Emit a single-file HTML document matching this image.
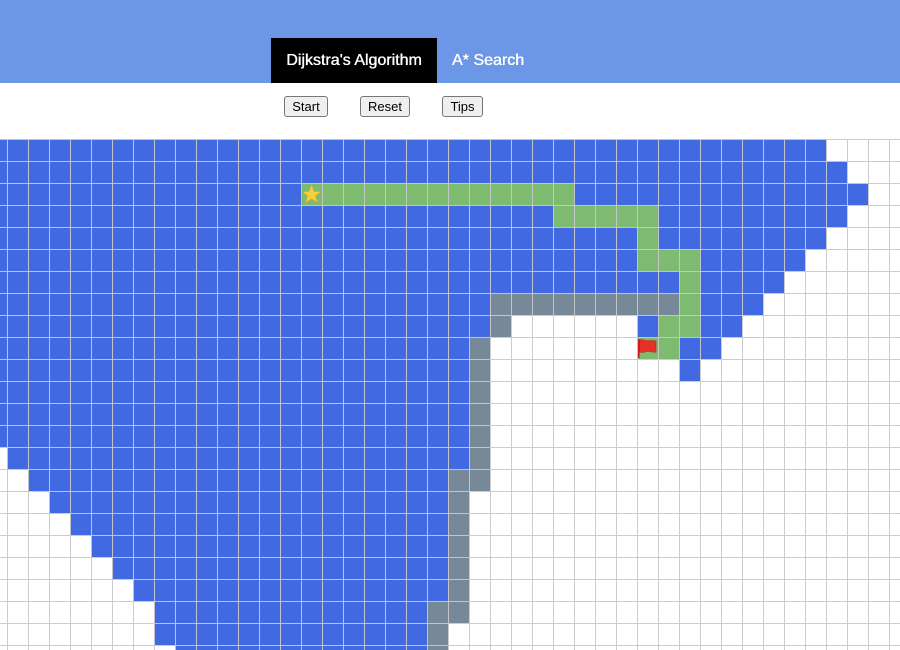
<!DOCTYPE html>
<html style="overflow:hidden;width:900px;height:650px"><head><style>
body{margin:0;width:900px;height:650px;overflow:hidden;background:#fff;font-family:"Liberation Sans",sans-serif;position:relative}
.hd{position:absolute;left:0;top:0;width:900px;height:83px;background:#6b97e6}
.tab{position:absolute;top:38px;height:45px;line-height:45px;color:#fff;font-size:16px;font-weight:normal;text-shadow:0 0 .4px #fff,.3px 0 0 #fff;font-family:"Liberation Sans",sans-serif}
.btn{position:absolute;top:96px;height:21px;box-sizing:border-box;border:1px solid #767676;border-radius:3px;background:#efefef;font-size:13px;line-height:19px;text-align:center;color:#000}
.r{position:absolute;height:22px}
.b{background:#4169e1}.y{background:#778899}.n{background:#7fba71}
.lines{position:absolute;left:0;top:139px;width:900px;height:511px;
background-image:repeating-linear-gradient(to right,rgba(200,200,205,.95) 0 1px,transparent 1px 21px),repeating-linear-gradient(to bottom,rgba(200,200,205,.95) 0 1px,transparent 1px 22px);
background-position:7px 0,0 0}
</style></head><body>
<div class="hd"></div>
<div class="tab" style="left:271px;width:166px;background:#000;text-align:center">Dijkstra's Algorithm</div>
<div class="tab" style="left:452px">A* Search</div>
<div class="btn" style="left:284px;width:44px">Start</div>
<div class="btn" style="left:360px;width:50px">Reset</div>
<div class="btn" style="left:442px;width:41px">Tips</div>

<div class="r b" style="left:-14px;top:139px;width:840px"></div>
<div class="r b" style="left:-14px;top:161px;width:861px"></div>
<div class="r b" style="left:-14px;top:183px;width:882px"></div>
<div class="r n" style="left:301px;top:183px;width:273px"></div>
<div class="r b" style="left:-14px;top:205px;width:861px"></div>
<div class="r n" style="left:553px;top:205px;width:105px"></div>
<div class="r b" style="left:-14px;top:227px;width:840px"></div>
<div class="r n" style="left:637px;top:227px;width:21px"></div>
<div class="r b" style="left:-14px;top:249px;width:819px"></div>
<div class="r n" style="left:637px;top:249px;width:63px"></div>
<div class="r b" style="left:-14px;top:271px;width:798px"></div>
<div class="r n" style="left:679px;top:271px;width:21px"></div>
<div class="r b" style="left:-14px;top:293px;width:777px"></div>
<div class="r y" style="left:490px;top:293px;width:189px"></div>
<div class="r n" style="left:679px;top:293px;width:21px"></div>
<div class="r b" style="left:-14px;top:315px;width:504px"></div>
<div class="r y" style="left:490px;top:315px;width:21px"></div>
<div class="r b" style="left:637px;top:315px;width:21px"></div>
<div class="r n" style="left:658px;top:315px;width:42px"></div>
<div class="r b" style="left:700px;top:315px;width:42px"></div>
<div class="r b" style="left:-14px;top:337px;width:483px"></div>
<div class="r y" style="left:469px;top:337px;width:21px"></div>
<div class="r n" style="left:637px;top:337px;width:42px"></div>
<div class="r b" style="left:679px;top:337px;width:42px"></div>
<div class="r b" style="left:-14px;top:359px;width:483px"></div>
<div class="r y" style="left:469px;top:359px;width:21px"></div>
<div class="r b" style="left:679px;top:359px;width:21px"></div>
<div class="r b" style="left:-14px;top:381px;width:483px;height:66px"></div>
<div class="r y" style="left:469px;top:381px;width:21px;height:88px"></div>
<div class="r b" style="left:7px;top:447px;width:462px"></div>
<div class="r b" style="left:28px;top:469px;width:420px"></div>
<div class="r y" style="left:448px;top:469px;width:42px"></div>
<div class="r b" style="left:49px;top:491px;width:399px"></div>
<div class="r b" style="left:70px;top:513px;width:378px"></div>
<div class="r b" style="left:91px;top:535px;width:357px"></div>
<div class="r b" style="left:112px;top:557px;width:336px"></div>
<div class="r b" style="left:133px;top:579px;width:315px"></div>
<div class="r y" style="left:448px;top:491px;width:21px;height:132px"></div>
<div class="r b" style="left:154px;top:601px;width:273px;height:44px"></div>
<div class="r y" style="left:427px;top:601px;width:21px;height:49px"></div>
<div class="r b" style="left:175px;top:645px;width:252px;height:5px"></div>

<div class="lines"></div>

<svg style="position:absolute;left:301px;top:183px" width="21" height="22" viewBox="0 0 21 22">
<polygon points="10.5,2 13,8.5 19.5,8.8 14.4,13 16.2,19.5 10.5,15.8 4.8,19.5 6.6,13 1.5,8.8 8,8.5" fill="#f5cf3c" stroke="#e0b020" stroke-width=".6"/>
</svg>
<svg style="position:absolute;left:637px;top:337px" width="21" height="22" viewBox="0 0 21 22">
<rect x="1" y="2" width="1.6" height="19" fill="#d01818"/>
<path d="M2.5 3 C6 1.5 9 5 13 3.5 L19 4 L19 15 C15 16 12 13 8 15 C6 16 4 15 2.5 15 Z" fill="#e8302a" stroke="#c41a14" stroke-width=".6"/>
</svg>
</body></html>
